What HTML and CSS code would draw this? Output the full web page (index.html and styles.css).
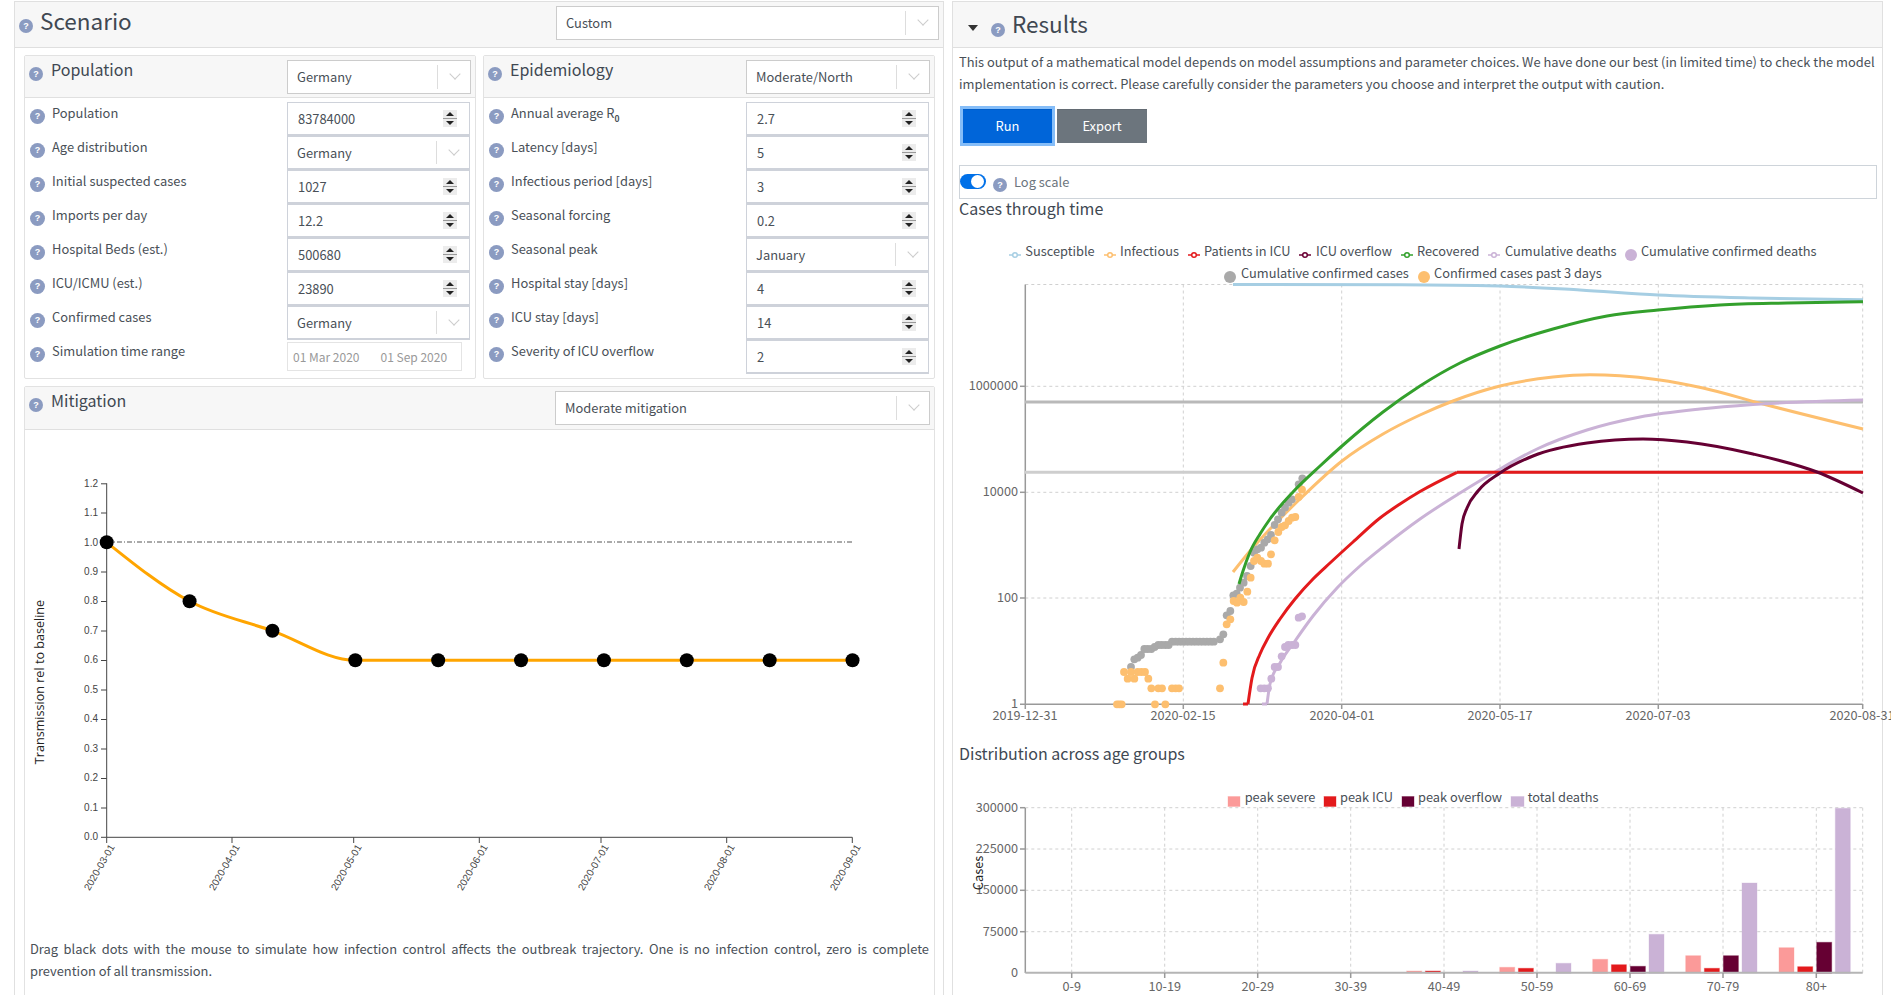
FILE: index.html
```html
<!DOCTYPE html>
<html lang="en">
<head>
<meta charset="utf-8">
<title>Scenario and Results</title>
<link rel="stylesheet" href="styles.css">
</head>
<body>
<div class="page">
  <section class="panel">
    <header class="panel-head">
      <span class="help help-top"><i>?</i></span>
      <h1>Scenario</h1>
      <div class="select select-wide scenario-select"><span>Custom</span><b class="chev"></b></div>
    </header>
    <div class="panel-body">
      <div class="two-cols">
        <section class="card">
          <header class="card-head">
            <span class="help"><i>?</i></span><h2>Population</h2>
            <div class="select head-select"><span>Germany</span><b class="chev"></b></div>
          </header>
          <div class="rows">
            <div class="row"><span class="help"><i>?</i></span><label>Population</label><div class="num"><span>83784000</span><b class="spin"></b></div></div>
            <div class="row"><span class="help"><i>?</i></span><label>Age distribution</label><div class="select"><span>Germany</span><b class="chev"></b></div></div>
            <div class="row"><span class="help"><i>?</i></span><label>Initial suspected cases</label><div class="num"><span>1027</span><b class="spin"></b></div></div>
            <div class="row"><span class="help"><i>?</i></span><label>Imports per day</label><div class="num"><span>12.2</span><b class="spin"></b></div></div>
            <div class="row"><span class="help"><i>?</i></span><label>Hospital Beds (est.)</label><div class="num"><span>500680</span><b class="spin"></b></div></div>
            <div class="row"><span class="help"><i>?</i></span><label>ICU/ICMU (est.)</label><div class="num"><span>23890</span><b class="spin"></b></div></div>
            <div class="row"><span class="help"><i>?</i></span><label>Confirmed cases</label><div class="select"><span>Germany</span><b class="chev"></b></div></div>
            <div class="row"><span class="help"><i>?</i></span><label>Simulation time range</label><div class="dates"><span>01 Mar 2020</span><span>01 Sep 2020</span></div></div>
          </div>
        </section>
        <section class="card">
          <header class="card-head">
            <span class="help"><i>?</i></span><h2>Epidemiology</h2>
            <div class="select head-select"><span>Moderate/North</span><b class="chev"></b></div>
          </header>
          <div class="rows">
            <div class="row"><span class="help"><i>?</i></span><label>Annual average R<sub>0</sub></label><div class="num"><span>2.7</span><b class="spin"></b></div></div>
            <div class="row"><span class="help"><i>?</i></span><label>Latency [days]</label><div class="num"><span>5</span><b class="spin"></b></div></div>
            <div class="row"><span class="help"><i>?</i></span><label>Infectious period [days]</label><div class="num"><span>3</span><b class="spin"></b></div></div>
            <div class="row"><span class="help"><i>?</i></span><label>Seasonal forcing</label><div class="num"><span>0.2</span><b class="spin"></b></div></div>
            <div class="row"><span class="help"><i>?</i></span><label>Seasonal peak</label><div class="select"><span>January</span><b class="chev"></b></div></div>
            <div class="row"><span class="help"><i>?</i></span><label>Hospital stay [days]</label><div class="num"><span>4</span><b class="spin"></b></div></div>
            <div class="row"><span class="help"><i>?</i></span><label>ICU stay [days]</label><div class="num"><span>14</span><b class="spin"></b></div></div>
            <div class="row"><span class="help"><i>?</i></span><label>Severity of ICU overflow</label><div class="num"><span>2</span><b class="spin"></b></div></div>
          </div>
        </section>
      </div>
      <section class="card mitigation">
        <header class="card-head tall">
          <span class="help"><i>?</i></span><h2>Mitigation</h2>
          <div class="select select-wide mitigation-select"><span>Moderate mitigation</span><b class="chev"></b></div>
        </header>
        <svg class="chart mit-chart" viewBox="25 430 909 508" width="909" height="508">
          <g class="mit-axis">
            <line x1="106.7" y1="483.3" x2="106.7" y2="837.3"/>
            <line x1="106.7" y1="837.3" x2="852.3" y2="837.3"/>
            <line x1="101" y1="483.8" x2="106.7" y2="483.8"/><line x1="101" y1="513" x2="106.7" y2="513"/><line x1="101" y1="542.5" x2="106.7" y2="542.5"/><line x1="101" y1="572" x2="106.7" y2="572"/><line x1="101" y1="601.5" x2="106.7" y2="601.5"/><line x1="101" y1="631" x2="106.7" y2="631"/><line x1="101" y1="660.5" x2="106.7" y2="660.5"/><line x1="101" y1="690" x2="106.7" y2="690"/><line x1="101" y1="719.5" x2="106.7" y2="719.5"/><line x1="101" y1="749" x2="106.7" y2="749"/><line x1="101" y1="778.5" x2="106.7" y2="778.5"/><line x1="101" y1="808" x2="106.7" y2="808"/><line x1="101" y1="837.3" x2="106.7" y2="837.3"/>
            <line x1="106.7" y1="837.3" x2="106.7" y2="843"/><line x1="232" y1="837.3" x2="232" y2="843"/><line x1="353.7" y1="837.3" x2="353.7" y2="843"/><line x1="479.3" y1="837.3" x2="479.3" y2="843"/><line x1="601" y1="837.3" x2="601" y2="843"/><line x1="726.7" y1="837.3" x2="726.7" y2="843"/><line x1="852.3" y1="837.3" x2="852.3" y2="843"/>
          </g>
          <line class="mit-base" x1="107" y1="542" x2="852" y2="542"/>
          <g class="mit-tick" text-anchor="end">
            <text x="98" y="487">1.2</text><text x="98" y="516">1.1</text><text x="98" y="546">1.0</text><text x="98" y="575">0.9</text><text x="98" y="604">0.8</text><text x="98" y="634">0.7</text><text x="98" y="663">0.6</text><text x="98" y="693">0.5</text><text x="98" y="722">0.4</text><text x="98" y="752">0.3</text><text x="98" y="781">0.2</text><text x="98" y="811">0.1</text><text x="98" y="840">0.0</text>
            <text transform="translate(115 847) rotate(-60)">2020-03-01</text>
            <text transform="translate(240 847) rotate(-60)">2020-04-01</text>
            <text transform="translate(362 847) rotate(-60)">2020-05-01</text>
            <text transform="translate(488 847) rotate(-60)">2020-06-01</text>
            <text transform="translate(609 847) rotate(-60)">2020-07-01</text>
            <text transform="translate(735 847) rotate(-60)">2020-08-01</text>
            <text transform="translate(861 847) rotate(-60)">2020-09-01</text>
          </g>
          <text class="mit-label" transform="translate(44 682) rotate(-90)" text-anchor="middle">Transmission rel to baseline</text>
          <g id="mitigation-curve"></g>
        </svg>
        <p class="note">Drag black dots with the mouse to simulate how infection control affects the outbreak trajectory. One is no infection control, zero is complete prevention of all transmission.</p>
      </section>
    </div>
  </section>

  <section class="panel">
    <header class="panel-head">
      <span class="caret"></span>
      <span class="help help-top results-help"><i>?</i></span>
      <h1 class="results-title">Results</h1>
    </header>
    <div class="results-body">
      <p class="intro">This output of a mathematical model depends on model assumptions and parameter choices. We have done our best (in limited time) to check the model implementation is correct. Please carefully consider the parameters you choose and interpret the output with caution.</p>
      <div class="buttons">
        <button class="btn btn-run" type="button">Run</button>
        <button class="btn btn-export" type="button">Export</button>
      </div>
      <div class="logbox">
        <span class="toggle"></span>
        <span class="help"><i>?</i></span>
        <span class="logtext">Log scale</span>
      </div>
      <h3>Cases through time</h3>
      <svg class="chart" viewBox="959 222 918 520" width="918" height="520">
        <g class="grid">
          <line x1="1025.3" y1="283.5" x2="1862.7" y2="283.5"/><line x1="1025.3" y1="385.3" x2="1862.7" y2="385.3"/><line x1="1025.3" y1="491.3" x2="1862.7" y2="491.3"/><line x1="1025.3" y1="597" x2="1862.7" y2="597"/>
          <line x1="1183.3" y1="283.5" x2="1183.3" y2="703"/><line x1="1341.7" y1="283.5" x2="1341.7" y2="703"/><line x1="1500" y1="283.5" x2="1500" y2="703"/><line x1="1658.3" y1="283.5" x2="1658.3" y2="703"/><line x1="1862.7" y1="283.5" x2="1862.7" y2="703"/>
        </g>
        <g class="axis">
          <line x1="1025.3" y1="283.5" x2="1025.3" y2="708"/>
          <line x1="1020" y1="703.3" x2="1862.7" y2="703.3"/>
          <line x1="1020" y1="385.3" x2="1025" y2="385.3"/><line x1="1020" y1="491.3" x2="1025" y2="491.3"/><line x1="1020" y1="597" x2="1025" y2="597"/>
          <line x1="1183.3" y1="703" x2="1183.3" y2="708"/><line x1="1341.7" y1="703" x2="1341.7" y2="708"/><line x1="1500" y1="703" x2="1500" y2="708"/><line x1="1658.3" y1="703" x2="1658.3" y2="708"/><line x1="1862.7" y1="703" x2="1862.7" y2="708"/>
        </g>
        <line class="cap cap-beds" x1="1025" y1="401" x2="1863" y2="401"/>
        <line class="cap cap-icu" x1="1025" y1="471.3" x2="1863" y2="471.3"/>
        <g id="cases-curves"></g>
        <g class="tick">
          <g text-anchor="end">
            <text x="1018" y="389">1000000</text><text x="1018" y="495">10000</text><text x="1018" y="601">100</text><text x="1018" y="707">1</text>
          </g>
          <g text-anchor="middle">
            <text x="1025" y="719">2019-12-31</text><text x="1183" y="719">2020-02-15</text><text x="1342" y="719">2020-04-01</text><text x="1500" y="719">2020-05-17</text><text x="1658" y="719">2020-07-03</text><text x="1862" y="719">2020-08-31</text>
          </g>
        </g>
        <g class="legend-key">
          <g class="k-s"><line x1="1009" y1="254" x2="1021" y2="254"/><circle cx="1015" cy="254" r="2.3"/></g>
          <g class="k-i"><line x1="1104" y1="254" x2="1116" y2="254"/><circle cx="1110" cy="254" r="2.3"/></g>
          <g class="k-c"><line x1="1188" y1="254" x2="1200" y2="254"/><circle cx="1194" cy="254" r="2.3"/></g>
          <g class="k-o"><line x1="1299" y1="254" x2="1311" y2="254"/><circle cx="1305" cy="254" r="2.3"/></g>
          <g class="k-r"><line x1="1401" y1="254" x2="1413" y2="254"/><circle cx="1407" cy="254" r="2.3"/></g>
          <g class="k-d"><line x1="1488" y1="254" x2="1500" y2="254"/><circle cx="1494" cy="254" r="2.3"/></g>
        </g>
        <circle class="dot-d" cx="1631" cy="254" r="6"/>
        <circle class="dot-c" cx="1230" cy="276" r="6"/>
        <circle class="dot-i" cx="1424" cy="276" r="6"/>
        <g class="legend">
          <text x="1025.3" y="255">Susceptible</text><text x="1120" y="255">Infectious</text><text x="1204" y="255">Patients in ICU</text><text x="1316" y="255">ICU overflow</text><text x="1417" y="255">Recovered</text><text x="1505" y="255">Cumulative deaths</text><text x="1641" y="255">Cumulative confirmed deaths</text>
          <text x="1241" y="277">Cumulative confirmed cases</text><text x="1434" y="277">Confirmed cases past 3 days</text>
        </g>
      </svg>
      <h3 class="h-age">Distribution across age groups</h3>
      <svg class="chart" viewBox="959 766 918 229" width="918" height="229">
        <g class="grid">
          <line x1="1025.3" y1="806.7" x2="1862.7" y2="806.7"/><line x1="1025.3" y1="848" x2="1862.7" y2="848"/><line x1="1025.3" y1="889.3" x2="1862.7" y2="889.3"/><line x1="1025.3" y1="930.7" x2="1862.7" y2="930.7"/>
          <line x1="1071.7" y1="806.7" x2="1071.7" y2="972"/><line x1="1164.7" y1="806.7" x2="1164.7" y2="972"/><line x1="1257.7" y1="806.7" x2="1257.7" y2="972"/><line x1="1350.7" y1="806.7" x2="1350.7" y2="972"/><line x1="1444" y1="806.7" x2="1444" y2="972"/><line x1="1537" y1="806.7" x2="1537" y2="972"/><line x1="1630" y1="806.7" x2="1630" y2="972"/><line x1="1723" y1="806.7" x2="1723" y2="972"/><line x1="1816.3" y1="806.7" x2="1816.3" y2="972"/><line x1="1862.7" y1="806.7" x2="1862.7" y2="972"/>
        </g>
        <g class="axis">
          <line x1="1025.3" y1="806.7" x2="1025.3" y2="972"/>
          <line x1="1020" y1="806.7" x2="1025" y2="806.7"/><line x1="1020" y1="848" x2="1025" y2="848"/><line x1="1020" y1="889.3" x2="1025" y2="889.3"/><line x1="1020" y1="930.7" x2="1025" y2="930.7"/>
        </g>
        <g class="bars-s"><rect x="1406.7" y="970" width="15" height="2"/><rect x="1499.7" y="966.3" width="15" height="6"/><rect x="1592.7" y="958.3" width="15" height="14"/><rect x="1685.7" y="954.7" width="15" height="17"/><rect x="1779" y="946.7" width="15" height="25"/></g>
        <g class="bars-c"><rect x="1425.4" y="970" width="15" height="2"/><rect x="1518.4" y="967.3" width="15" height="5"/><rect x="1611.4" y="963.7" width="15" height="8"/><rect x="1704.4" y="967.3" width="15" height="5"/><rect x="1797.7" y="965.7" width="15" height="6"/></g>
        <g class="bars-o"><rect x="1630.4" y="965.3" width="15" height="7"/><rect x="1723.4" y="954.7" width="15" height="17"/><rect x="1816.7" y="941.3" width="15" height="31"/></g>
        <g class="bars-d"><rect x="1463" y="970" width="15" height="2"/><rect x="1556" y="962.3" width="15" height="10"/><rect x="1649" y="933.3" width="15" height="39"/><rect x="1742" y="882" width="15" height="90"/><rect x="1835.3" y="807.3" width="15" height="165"/></g>
        <line class="bar-base" x1="1025.3" y1="971.8" x2="1862.7" y2="971.8"/>
        <g class="axis">
          <line x1="1071.7" y1="972" x2="1071.7" y2="977"/><line x1="1164.7" y1="972" x2="1164.7" y2="977"/><line x1="1257.7" y1="972" x2="1257.7" y2="977"/><line x1="1350.7" y1="972" x2="1350.7" y2="977"/><line x1="1444" y1="972" x2="1444" y2="977"/><line x1="1537" y1="972" x2="1537" y2="977"/><line x1="1630" y1="972" x2="1630" y2="977"/><line x1="1723" y1="972" x2="1723" y2="977"/><line x1="1816.3" y1="972" x2="1816.3" y2="977"/>
        </g>
        <g class="tick">
          <g text-anchor="end">
            <text x="1018" y="811">300000</text><text x="1018" y="852">225000</text><text x="1018" y="893">150000</text><text x="1018" y="935">75000</text><text x="1018" y="976">0</text>
          </g>
          <g text-anchor="middle">
            <text x="1071.7" y="990">0-9</text><text x="1164.7" y="990">10-19</text><text x="1257.7" y="990">20-29</text><text x="1350.7" y="990">30-39</text><text x="1444" y="990">40-49</text><text x="1537" y="990">50-59</text><text x="1630" y="990">60-69</text><text x="1723" y="990">70-79</text><text x="1816.3" y="990">80+</text>
          </g>
        </g>
        <text class="cases-label" transform="translate(983 872) rotate(-90)" text-anchor="middle">Cases</text>
        <rect class="key-s" x="1228" y="795.5" width="12" height="10"/><rect class="key-c" x="1324" y="795.5" width="12" height="10"/><rect class="key-o" x="1402" y="795.5" width="12" height="10"/><rect class="key-d" x="1511" y="795.5" width="13" height="10"/>
        <g class="legend">
          <text x="1244.7" y="801">peak severe</text><text x="1340" y="801">peak ICU</text><text x="1418" y="801">peak overflow</text><text x="1527.7" y="801">total deaths</text>
        </g>
      </svg>
    </div>
  </section>
</div>
<script src="charts.js"></script>
</body>
</html>
```
FILE: styles.css
```css
* { box-sizing: border-box; }
html, body { margin: 0; height: 995px; overflow: hidden; background: #fff; }
body {
  font-family: "Noto Sans CJK SC", "Source Sans Pro", "Liberation Sans", sans-serif;
  font-size: 12.9px;
  line-height: 22px;
  color: #495057;
}
h1, h2, h3, p { margin: 0; font-weight: 400; }

.page { display: grid; grid-template-columns: 930px 931px; column-gap: 8px; padding: 1px 0 0 14px; height: 995px; }
.panel { border: 1px solid #e0e0e0; border-bottom: 0; height: 1100px; }
.panel-head { display: flex; align-items: flex-start; background: #f7f7f7; height: 46px; border-bottom: 1px solid #dfdfdf; padding: 0 4px; }
.panel-head h1 { font-size: 22.5px; line-height: 34px; margin: 1px 0 0 7px; color: #404852; flex: 1; }
.panel-body { padding: 7px 8px 0 9px; }
.two-cols { display: grid; grid-template-columns: 452px 452px; column-gap: 7px; }

.card { border: 1px solid #e2e2e2; border-radius: 2px; }
.card-head { display: flex; align-items: flex-start; background: #f7f7f7; height: 42px; border-bottom: 1px solid #e0e0e0; padding: 0 4px; }
.card-head.tall { height: 43px; }
.card-head h2 { font-size: 16px; line-height: 26px; margin: 0 0 0 8px; color: #404852; flex: 1; }
.card-head .help { margin: 11px 0 0 0; }
.rows { padding: 4px 5px; }
.row { display: flex; align-items: flex-start; height: 34px; }
.row .help { margin-top: 7px; width: 15px; height: 15px; }
.row label { flex: 1; margin-left: 7px; }
sub { font-size: 8.5px; font-weight: 700; line-height: 0; }

.help { flex: none; display: flex; align-items: center; justify-content: center; width: 14px; height: 14px; border-radius: 50%; background: #8b9bc1; }
.help i { font: 700 9px/1 "Liberation Sans", sans-serif; color: #fff; }
.help-top { margin-top: 17px; }

.select, .num { position: relative; display: flex; align-items: center; width: 183px; height: 34px; background: #fff; border: 1px solid #ced2da; border-bottom-width: 2px; }
.select { padding-left: 9px; padding-top: 1px; }
.num { padding-left: 10px; }
.head-select { width: 184px; margin-top: 4px; padding-top: 0; border-bottom-width: 1px; border-color: #ccc; }
.select-wide { margin-top: 4px; padding-top: 0; border-bottom-width: 1px; border-color: #ccc; }
.scenario-select { width: 383px; flex: none; }
.mitigation-select { width: 375px; flex: none; margin-top: 4px; }
.chev { position: absolute; right: 0; top: 4px; bottom: 4px; width: 33px; border-left: 1px solid #ddd; }
.chev::after { content: ""; position: absolute; left: 13px; top: 5px; width: 7px; height: 7px; border-right: 1.5px solid #ccc; border-bottom: 1.5px solid #ccc; transform: rotate(45deg); }
.spin { position: absolute; right: 12px; top: 7px; width: 14px; height: 17px; background: linear-gradient(#ececec 8px, #9a9a9a 8px, #9a9a9a 9px, #ececec 9px); }
.spin::before, .spin::after { content: ""; position: absolute; left: 3px; width: 0; height: 0; box-sizing: content-box; border-left: 4px solid transparent; border-right: 4px solid transparent; }
.spin::before { top: 2px; border-bottom: 4px solid #222; }
.spin::after { bottom: 2px; border-top: 4px solid #222; }
.dates { display: flex; gap: 21px; flex: none; width: 175px; height: 29px; margin: 2px 8px 0 0; padding-left: 5px; align-items: center; border: 1px solid #e4e4e4; color: #999; font-size: 12px; white-space: nowrap; }

.mitigation { margin-top: 7px; height: 700px; }
.chart { display: block; overflow: visible; }
.note { padding: 0 5px; text-align: justify; }
.mit-axis line { stroke: #444; stroke-width: 1; }
.mit-base { stroke: #555; stroke-width: 1; stroke-dasharray: 5 2 1 2; }
.mit-tick { font: 10px "Liberation Sans", sans-serif; fill: #444; }
.mit-label { font: 12.6px "Open Sans", "Liberation Sans", sans-serif; fill: #222; }

.caret { flex: none; width: 0; height: 0; margin: 23px 0 0 11px; border-left: 5.5px solid transparent; border-right: 5.5px solid transparent; border-top: 6px solid #333; }
.results-help { margin: 21px 0 0 13px; }
.panel-head .results-title { margin: 4px 0 0 7px; }
.results-body { padding: 3px 5px 0 6px; }
.buttons { display: flex; gap: 5px; margin: 14px 0 0 4px; }
.btn { height: 34px; border: 0; border-top: 1px solid rgba(0,0,0,.08); border-radius: 0; color: #fff; font: inherit; padding: 0 0 1px; }
.btn-run { width: 89px; background: #0065d9; box-shadow: 0 0 0 3px #85bdf8; }
.btn-export { width: 90px; background: #6c757d; }
.logbox { display: flex; align-items: flex-start; height: 34px; margin-top: 22px; border: 1px solid #ced4da; }
.toggle { position: relative; width: 26px; height: 15px; margin-top: 8px; border-radius: 8px; background: #0070e8; }
.toggle::after { content: ""; position: absolute; right: 2px; top: 1px; width: 13px; height: 13px; border-radius: 50%; background: #fff; }
.logbox .help { margin: 12px 0 0 7px; }
.logtext { margin: 5px 0 0 7px; color: #6c757d; }
h3 { font-size: 16px; line-height: 18px; height: 24px; color: #404852; }
.h-age { line-height: 20px; }

.grid line { stroke: #d0d0d0; stroke-width: 1; stroke-dasharray: 3 3; }
.axis line { stroke: #999; stroke-width: 1.5; }
.cap { stroke-width: 3; }
.cap-beds { stroke: #b9b9b9; }
.cap-icu { stroke: #cecece; }
.tick { font: 12.7px "Noto Sans CJK SC", sans-serif; fill: #666; }
.legend { font: 12.8px "Noto Sans CJK SC", sans-serif; fill: #495057; }
.cases-label { font: 12.8px "Noto Sans CJK SC", sans-serif; fill: #222; }
.legend-key line { stroke-width: 1.5; }
.legend-key circle { fill: #fff; stroke-width: 1.5; }
.k-s line, .k-s circle { stroke: #a6cee3; }
.k-i line, .k-i circle { stroke: #fdbf6f; }
.k-c line, .k-c circle { stroke: #e31a1c; }
.k-o line, .k-o circle { stroke: #6a0034; }
.k-r line, .k-r circle { stroke: #33a02c; }
.k-d line, .k-d circle { stroke: #cab2d6; }
.dot-d { fill: #cab2d6; }
.dot-c { fill: #a9a9a9; }
.dot-i { fill: #fdbf6f; }
.bars-s rect, .key-s { fill: #fb9a99; stroke: #fb9a99; stroke-opacity: .35; }
.bars-c rect, .key-c { fill: #e31a1c; stroke: #e31a1c; stroke-opacity: .35; }
.bars-o rect, .key-o { fill: #660033; stroke: #660033; stroke-opacity: .35; }
.bars-d rect, .key-d { fill: #cab2d6; stroke: #cab2d6; stroke-opacity: .35; }
.bar-base { stroke: #b5b5b5; stroke-width: 2; }

.curve { fill: none; stroke-width: 3; stroke-linejoin: round; }
.c-s { stroke: #a6cee3; }
.c-r { stroke: #33a02c; }
.c-i { stroke: #fdbf6f; }
.c-c { stroke: #e31a1c; }
.c-o { stroke: #660033; }
.c-d { stroke: #cab2d6; }
.mit-line { fill: none; stroke: #ffa500; stroke-width: 3; }
.mit-dot { fill: #000; }
```
FILE: charts.js
```js
(function () {
  var NS = "http://www.w3.org/2000/svg";

  function add(parent, name, attrs) {
    var el = document.createElementNS(NS, name);
    Object.keys(attrs).forEach(function (k) { el.setAttribute(k, attrs[k]); });
    parent.appendChild(el);
    return el;
  }

  // Monotone cubic interpolation (same shape as d3.curveMonotoneX).
  function sign(v) { return v < 0 ? -1 : 1; }
  function monotone(pts) {
    var n = pts.length, t = [], i;
    if (n < 3) return "M" + pts.map(function (p) { return p.join(" "); }).join("L");
    for (i = 1; i < n - 1; i++) {
      var h0 = pts[i][0] - pts[i - 1][0], h1 = pts[i + 1][0] - pts[i][0];
      var s0 = (pts[i][1] - pts[i - 1][1]) / h0, s1 = (pts[i + 1][1] - pts[i][1]) / h1;
      var p = (s0 * h1 + s1 * h0) / (h0 + h1);
      t[i] = (sign(s0) + sign(s1)) * Math.min(Math.abs(s0), Math.abs(s1), 0.5 * Math.abs(p)) || 0;
    }
    t[0] = (3 * (pts[1][1] - pts[0][1]) / (pts[1][0] - pts[0][0]) - t[1]) / 2;
    t[n - 1] = (3 * (pts[n - 1][1] - pts[n - 2][1]) / (pts[n - 1][0] - pts[n - 2][0]) - t[n - 2]) / 2;
    var d = "M" + pts[0][0] + " " + pts[0][1];
    for (i = 1; i < n; i++) {
      var dx = (pts[i][0] - pts[i - 1][0]) / 3;
      d += "C" + (pts[i - 1][0] + dx) + " " + (pts[i - 1][1] + dx * t[i - 1]) + " " +
        (pts[i][0] - dx) + " " + (pts[i][1] - dx * t[i]) + " " + pts[i][0] + " " + pts[i][1];
    }
    return d;
  }

  /* Mitigation curve */
  var mit = document.getElementById("mitigation-curve");
  var vals = [1, 0.8, 0.7, 0.6, 0.6, 0.6, 0.6, 0.6, 0.6, 0.6];
  var mitPts = vals.map(function (v, i) {
    return [106.7 + i * 82.87, 837.3 - v * 295];
  });
  add(mit, "path", { "class": "mit-line", d: monotone(mitPts) });
  mitPts.forEach(function (p) {
    add(mit, "circle", { "class": "mit-dot", cx: p[0], cy: p[1], r: 7 });
  });

  /* Cases through time */
  var g = document.getElementById("cases-curves");
  function curve(cls, pts) { add(g, "path", { "class": "curve " + cls, d: monotone(pts) }); }
  function dots(cls, list, r) {
    list.forEach(function (p) {
      add(g, "circle", { "class": cls, cx: 950 + p[0] / 3, cy: 280 + p[1] / 3, r: r });
    });
  }

  curve("c-s", [[1233, 283.5], [1400, 283.7], [1500, 285], [1580, 289], [1658, 294], [1753, 297], [1863, 298.7]]);
  curve("c-i", [[1233, 571], [1250, 550], [1270, 528], [1300, 498], [1342, 460], [1383, 433], [1420, 414], [1453, 400],
    [1500, 385], [1553, 376], [1590, 373.7], [1620, 374.7], [1658, 378.7], [1703, 387], [1763, 403], [1863, 428]]);

  var gray = [[543, 1158], [553, 1135], [563, 1130], [573, 1122], [583, 1104], [593, 1104], [604, 1104], [614, 1098],
    [625, 1092], [635, 1092], [646, 1092], [656, 1092], [666, 1082]];
  for (var x = 677; x <= 800; x += 10.4) gray.push([x, 1082]);
  gray = gray.concat([[810, 1075], [820, 1060], [830, 1003], [841, 990], [850, 943], [860, 938], [870, 920], [881, 905],
    [891, 885], [902, 855], [912, 815], [922, 805], [933, 800], [943, 785], [953, 775], [963, 762], [974, 732], [984, 715],
    [995, 695], [1005, 680], [1016, 665], [1026, 655], [1046, 610], [1057, 592]]);
  dots("dot-c", gray, 3.9);
  dots("dot-i", [[501, 1270], [508, 1270], [515, 1270], [522, 1173], [533, 1193], [543, 1173], [553, 1193], [563, 1173],
    [574, 1173], [585, 1173], [595, 1193], [604, 1222], [625, 1222], [636, 1222], [615, 1270], [646, 1270], [666, 1222],
    [677, 1222], [687, 1222], [810, 1222], [820, 1145], [830, 1030], [841, 1015], [851, 960], [861, 965], [871, 950],
    [881, 963], [892, 932], [902, 890], [912, 840], [922, 830], [933, 840], [943, 848], [954, 848], [963, 820], [974, 778],
    [985, 753], [995, 738], [1005, 733], [1016, 720], [1026, 710], [1036, 708], [1046, 648], [1056, 626]], 3.9);
  dots("dot-d", [[932, 1222], [943, 1222], [954, 1222], [964, 1193], [974, 1158], [984, 1158], [995, 1126], [1005, 1098],
    [1015, 1092], [1026, 1092], [1036, 1092], [1046, 1010], [1056, 1006]], 3.9);

  curve("c-d", [[1262, 703], [1267, 703]]);
  curve("c-d", [[1267, 703], [1270, 683], [1280, 662], [1295, 640], [1313, 615], [1337, 587], [1360, 565], [1383, 546], [1420, 518], [1460, 492],
    [1500, 468], [1537, 448], [1587, 429], [1640, 416], [1700, 408], [1753, 403.5], [1863, 399]]);
  curve("c-c", [[1243, 703], [1248, 703]]);
  curve("c-c", [[1248, 703], [1252, 677], [1260, 653], [1268, 637], [1280, 618], [1295, 598], [1313, 578], [1330, 562], [1353, 541],
    [1380, 517], [1400, 503], [1420, 490.5], [1457, 471.3]]);
  curve("c-c", [[1457, 471.3], [1863, 471.3]]);
  curve("c-o", [[1459, 548], [1462, 523], [1467, 507], [1478, 490], [1500, 472], [1533, 455], [1587, 442], [1643, 438],
    [1687, 441], [1753, 453], [1817, 471], [1863, 492]]);
  curve("c-r", [[1239, 583], [1243, 570], [1250, 551], [1260, 533], [1270, 518], [1293, 491], [1320, 465], [1342, 445], [1383, 411], [1420, 385],
    [1460, 362], [1500, 345], [1553, 328], [1607, 315], [1658, 309], [1720, 304], [1787, 302], [1863, 300.7]]);
})();
```
